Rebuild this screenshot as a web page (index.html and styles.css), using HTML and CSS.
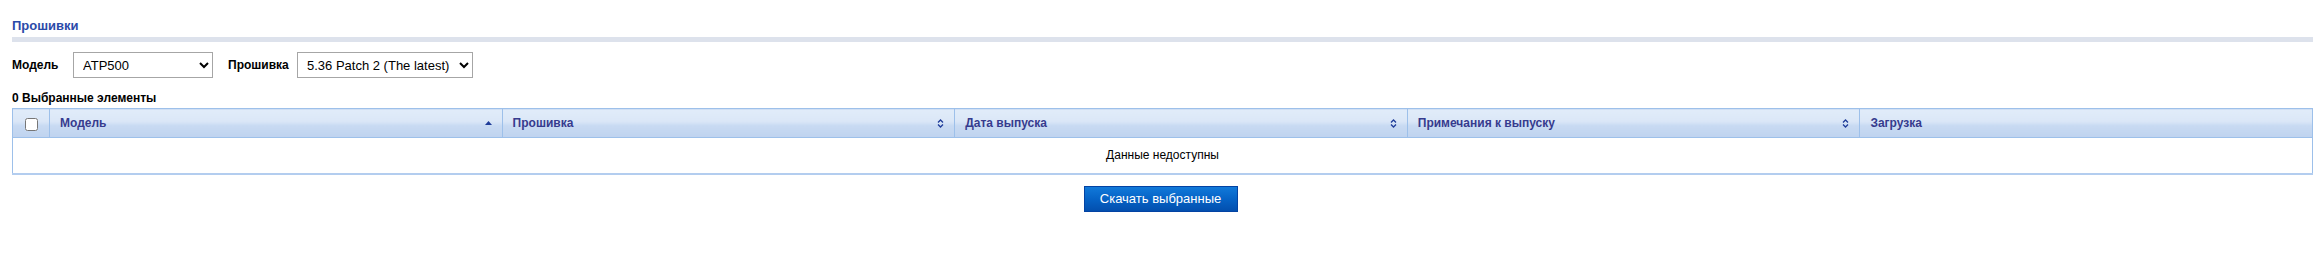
FILE: index.html
```html
<!DOCTYPE html>
<html lang="ru">
<head>
  <meta charset="UTF-8" />
  <title>Прошивки</title>
  <link rel="stylesheet" href="styles.css">
</head>
<body>
  <div class="page">
    <h2 class="section-title">Прошивки</h2>
    <div class="section-bar"></div>

    <div class="filters">
      <label class="filter-label model-label" for="model">Модель</label>
      <select id="model" class="filter-select model-select">
        <option>ATP500</option>
      </select>
      <label class="filter-label fw-label" for="firmware">Прошивка</label>
      <select id="firmware" class="filter-select fw-select">
        <option>5.36 Patch 2 (The latest)</option>
      </select>
    </div>

    <div class="selected-count">0 Выбранные элементы</div>

    <table class="fw-table">
      <colgroup>
        <col class="col-check">
        <col><col><col><col><col>
      </colgroup>
      <thead>
        <tr>
          <th class="check-cell"><input type="checkbox"></th>
          <th>
            <div class="th-inner">Модель
              <svg class="sort-icon" width="7" height="4" viewBox="0 0 7 4"><path d="M0 4 L3.5 0 L7 4 Z" fill="#1f3c99"/></svg>
            </div>
          </th>
          <th>
            <div class="th-inner">Прошивка
              <svg class="sort-icon" width="7" height="9" viewBox="0 0 7 9"><path d="M1 3.5 L3.5 1 L6 3.5 M1 5.5 L3.5 8 L6 5.5" fill="none" stroke="#1f3c99" stroke-width="1.3"/></svg>
            </div>
          </th>
          <th>
            <div class="th-inner">Дата выпуска
              <svg class="sort-icon" width="7" height="9" viewBox="0 0 7 9"><path d="M1 3.5 L3.5 1 L6 3.5 M1 5.5 L3.5 8 L6 5.5" fill="none" stroke="#1f3c99" stroke-width="1.3"/></svg>
            </div>
          </th>
          <th>
            <div class="th-inner">Примечания к выпуску
              <svg class="sort-icon" width="7" height="9" viewBox="0 0 7 9"><path d="M1 3.5 L3.5 1 L6 3.5 M1 5.5 L3.5 8 L6 5.5" fill="none" stroke="#1f3c99" stroke-width="1.3"/></svg>
            </div>
          </th>
          <th>
            <div class="th-inner">Загрузка</div>
          </th>
        </tr>
      </thead>
      <tbody>
        <tr>
          <td class="empty-cell" colspan="6">Данные недоступны</td>
        </tr>
      </tbody>
    </table>

    <div class="actions">
      <button class="download-button">Скачать выбранные</button>
    </div>
  </div>
</body>
</html>
```

FILE: styles.css
```css
* {
  margin: 0;
  padding: 0;
  box-sizing: border-box;
}

body {
  font-family: "Liberation Sans", Arial, sans-serif;
  font-size: 12px;
  color: #000;
  background: #fff;
}

.page {
  padding: 17px 10px 0 12px;
}

.section-title {
  font-size: 13px;
  font-weight: bold;
  line-height: 17px;
  color: #2b4aa8;
}

.section-bar {
  height: 5px;
  margin-top: 3px;
  background: #dde2ec;
}

.filters {
  display: flex;
  align-items: center;
  margin-top: 10px;
}

.filter-label {
  font-weight: bold;
  font-size: 12px;
}

.model-label {
  width: 61px;
}

.fw-label {
  width: 69px;
  margin-left: 15px;
}

.filter-select {
  height: 26px;
  font-family: "Liberation Sans", Arial, sans-serif;
  font-size: 13px;
  color: #000;
  background: #fff;
  border: 1px solid #a6a6a6;
  padding: 0 2px 0 5px;
}

.model-select {
  width: 140px;
}

.fw-select {
  width: 176px;
}

.selected-count {
  margin-top: 13px;
  font-weight: bold;
  line-height: 14px;
}

.fw-table {
  width: 100%;
  margin-top: 3px;
  border-collapse: collapse;
  table-layout: fixed;
  border: 1px solid #9dc0ea;
  border-bottom: 2px solid #b3cdef;
}

.col-check {
  width: 37px;
}

.fw-table th {
  height: 29px;
  padding: 0 10px 0 10px;
  background: linear-gradient(180deg, #e1ecf9 0%, #dbe7f7 42%, #c8daf2 58%, #bfd3ef 100%);
  border-left: 1px solid #9dc0ea;
  border-bottom: 1px solid #9dc0ea;
  color: #363b8e;
  font-weight: bold;
  font-size: 12px;
  text-align: left;
}

.fw-table th.check-cell {
  padding: 0;
  text-align: center;
  border-left: none;
}

.check-cell input {
  width: 13px;
  height: 13px;
  margin: 5px 0 0 1px;
}

.th-inner {
  display: flex;
  align-items: center;
  justify-content: space-between;
}

.sort-icon {
  flex-shrink: 0;
}

.empty-cell {
  height: 36px;
  text-align: center;
  font-size: 12px;
}

.actions {
  display: flex;
  justify-content: center;
  margin-top: 11px;
  padding-right: 4px;
}

.download-button {
  width: 154px;
  height: 26px;
  border: 1px solid #0343a3;
  background: linear-gradient(180deg, #1179d9 0%, #0663c6 50%, #034fae 100%);
  color: #fff;
  font-family: "Liberation Sans", Arial, sans-serif;
  font-size: 13px;
  cursor: pointer;
}
```
